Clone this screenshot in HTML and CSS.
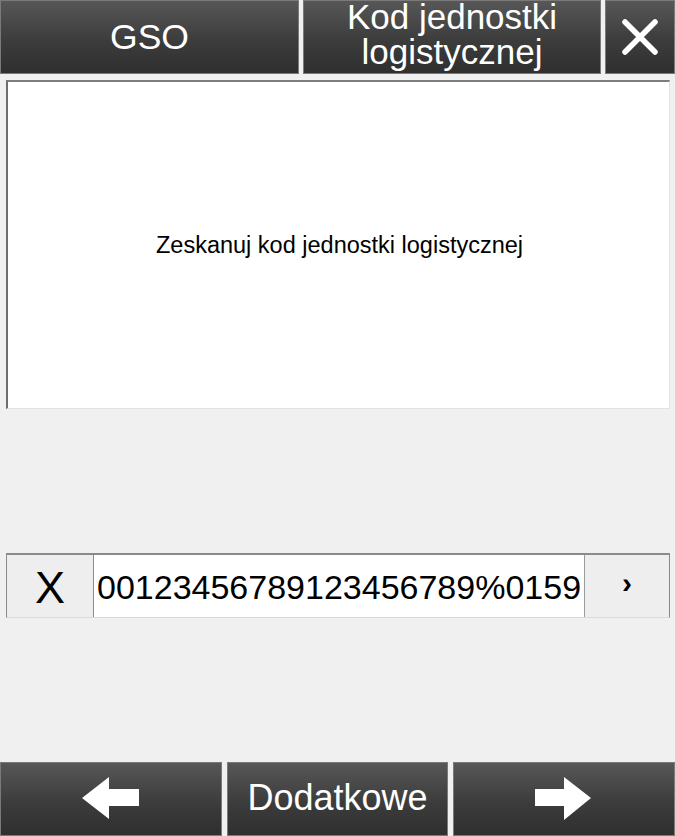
FILE: index.html
```html
<!DOCTYPE html>
<html lang="pl">
<head>
<meta charset="utf-8">
<title>GSO</title>
<link rel="stylesheet" href="styles.css">
</head>
<body>
<div class="screen">
  <div class="topbar">
    <div class="btn dark title-gso">GSO</div>
    <div class="btn dark title-kod">Kod jednostki<br>logistycznej</div>
    <div class="btn dark close">
      <svg width="36" height="36" viewBox="0 0 36 36"><path d="M3 3 L33 33 M33 3 L3 33" stroke="#fff" stroke-width="5.5" stroke-linecap="round"/></svg>
    </div>
  </div>
  <div class="panel">
    <span class="msg">Zeskanuj kod jednostki logistycznej</span>
  </div>
  <div class="inputrow">
    <div class="clear">X</div>
    <div class="field">00123456789123456789%0159</div>
    <div class="go">›</div>
  </div>
  <div class="bottombar">
    <div class="btn dark nav">
      <svg width="58" height="44" viewBox="0 0 58 44"><polygon points="0,21 27,0 27,12 57,12 57,29 27,29 27,42" fill="#fff"/></svg>
    </div>
    <div class="btn dark nav label">Dodatkowe</div>
    <div class="btn dark nav">
      <svg width="58" height="44" viewBox="0 0 58 44"><polygon points="56,21 29,0 29,12 0,12 0,29 29,29 29,43" fill="#fff"/></svg>
    </div>
  </div>
</div>
</body>
</html>
```
FILE: styles.css
```css
html, body {
  margin: 0;
  padding: 0;
  background: #f0f0f0;
}
.screen {
  width: 675px;
  height: 836px;
  display: flex;
  flex-direction: column;
  font-family: "Liberation Sans", Arial, sans-serif;
  overflow: hidden;
}
.topbar {
  display: flex;
  gap: 4px;
  height: 74px;
  flex: none;
}
.btn {
  box-sizing: border-box;
  display: flex;
  align-items: center;
  justify-content: center;
  text-align: center;
  color: #fff;
}
.dark {
  background: linear-gradient(#575757, #3c3c3c 55%, #2f2f2f);
  border: 1px solid #7a7a7a;
}
.title-gso {
  width: 299px;
  font-size: 35.5px;
}
.title-kod {
  width: 298px;
  font-size: 35px;
  line-height: 35px;
  padding-bottom: 6px;
}
.close {
  flex: 1;
}
.panel {
  box-sizing: border-box;
  margin: 6px 5px 0 6px;
  height: 329px;
  background: #fff;
  border-top: 2px solid #7d7d7d;
  border-left: 2px solid #6e6e6e;
  border-right: 1px solid #e2e2e2;
  border-bottom: 1px solid #e2e2e2;
  display: flex;
  align-items: center;
  justify-content: center;
  flex: none;
}
.msg {
  font-size: 23.5px;
  color: #000;
  margin-left: 2px;
}
.inputrow {
  box-sizing: border-box;
  margin: 144px 5px 0 6px;
  height: 65px;
  display: flex;
  border-top: 2px solid #8a8a8a;
  border-left: 1px solid #8a8a8a;
  border-right: 1px solid #8a8a8a;
  border-bottom: 1px solid #dadada;
  background: #fff;
  flex: none;
}
.clear {
  width: 86px;
  background: #eeeeee;
  border-right: 1px solid #8a8a8a;
  display: flex;
  align-items: center;
  justify-content: center;
  font-size: 45px;
  color: #000;
  padding-top: 4px;
}
.field {
  width: 490px;
  display: flex;
  align-items: center;
  padding-left: 3px;
  box-sizing: border-box;
  font-size: 34px;
  color: #000;
  white-space: nowrap;
  overflow: hidden;
  padding-top: 2px;
}
.go {
  flex: 1;
  background: #eeeeee;
  border-left: 1px solid #9a9a9a;
  display: flex;
  align-items: center;
  justify-content: center;
  font-size: 30px;
  font-weight: bold;
  color: #000;
  padding-bottom: 6px;
}
.bottombar {
  margin-top: auto;
  display: flex;
  gap: 5px;
  height: 74px;
  flex: none;
}
.nav {
  flex: 1;
}
.label {
  flex: 0 0 221px;
  font-size: 36px;
  padding-bottom: 2px;
}
```
